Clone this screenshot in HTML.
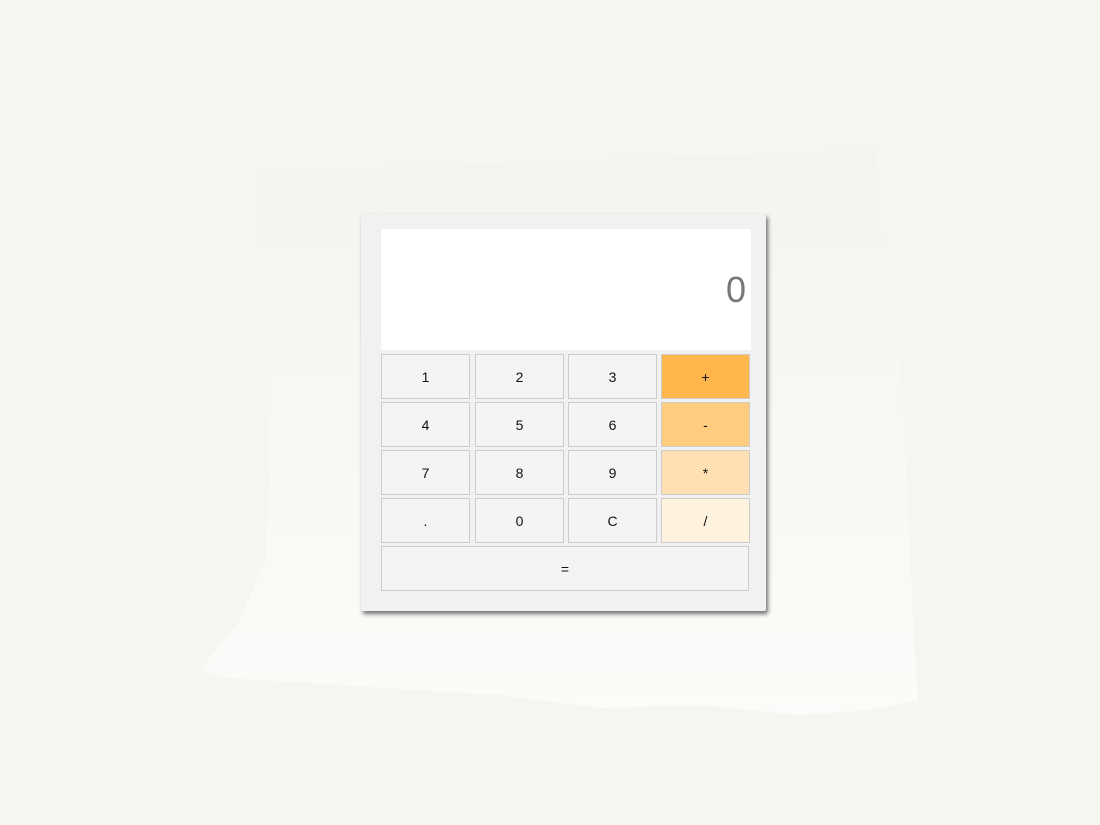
<!DOCTYPE html>
<html><head><meta charset="utf-8"><style>
html,body{margin:0;padding:0;width:1100px;height:825px;background:#f6f6f1;overflow:hidden;font-family:"Liberation Sans",sans-serif;}
svg.bg{position:absolute;left:0;top:0}
.calc{position:absolute;left:361px;top:214px;width:405px;height:397px;background:#f1f1f1;border-radius:2px;box-shadow:2px 3px 4px rgba(0,0,0,0.55);}
.disp{position:absolute;left:20px;top:15px;width:370px;height:121px;background:#fff;}
.disp span{position:absolute;right:5px;top:40px;font-size:36px;color:#777;}
.b{position:absolute;width:87px;height:43px;border:1px solid #ccc;background:#f4f4f4;font-size:14px;color:#111;display:flex;align-items:center;justify-content:center;}
</style></head><body>
<svg class="bg" width="1100" height="825"><defs><linearGradient id="g" x1="0" y1="0" x2="0" y2="1"><stop offset="0" stop-color="#f4f4ef"/><stop offset="1" stop-color="#fbfbf9"/></linearGradient></defs>
<path d="M263 172 L875 150 L880 230 L898 300 L905 450 L912 600 L918 700 L870 710 L800 715 L700 705 L600 708 L500 695 L420 690 L310 683 L230 678 L200 670 L240 620 L265 560 L270 480 L265 400 L262 300 Z" fill="url(#g)"/></svg>
<div class="calc">
<div class="disp"><span>0</span></div>
</div>
<div class="b" style="left:381px;top:354px">1</div>
<div class="b" style="left:475px;top:354px">2</div>
<div class="b" style="left:568px;top:354px">3</div>
<div class="b" style="left:661px;top:354px;background:#ffb74d">+</div>
<div class="b" style="left:381px;top:402px">4</div>
<div class="b" style="left:475px;top:402px">5</div>
<div class="b" style="left:568px;top:402px">6</div>
<div class="b" style="left:661px;top:402px;background:#ffcc80">-</div>
<div class="b" style="left:381px;top:450px">7</div>
<div class="b" style="left:475px;top:450px">8</div>
<div class="b" style="left:568px;top:450px">9</div>
<div class="b" style="left:661px;top:450px;background:#ffe0b2">*</div>
<div class="b" style="left:381px;top:498px">.</div>
<div class="b" style="left:475px;top:498px">0</div>
<div class="b" style="left:568px;top:498px">C</div>
<div class="b" style="left:661px;top:498px;background:#fff3e0">/</div>
<div class="b" style="left:381px;top:546px;width:366px">=</div>
</body></html>
